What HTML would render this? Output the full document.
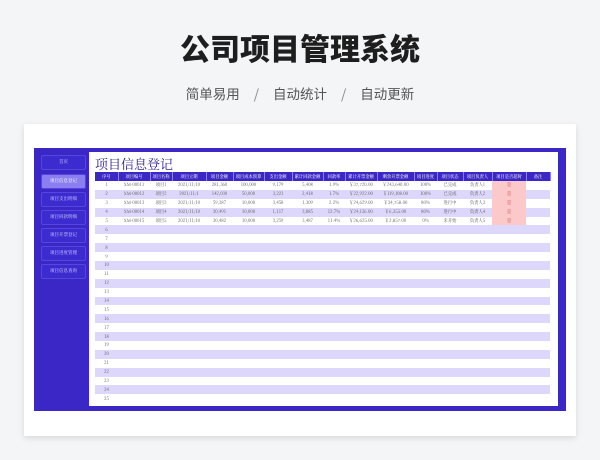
<!DOCTYPE html>
<html><head><meta charset="utf-8"><style>
*{margin:0;padding:0;box-sizing:border-box}
body{width:600px;height:460px;background:#f4f5f7;font-family:"Liberation Sans","Noto Sans CJK SC",sans-serif;position:relative;overflow:hidden}
h1{position:absolute;top:25px;left:0;width:600px;text-align:center;font-size:30px;font-weight:900;color:#1e1e1e;font-family:"Noto Sans CJK SC",sans-serif}
.sub{position:absolute;top:83px;left:0;width:600px;text-align:center;font-size:13.5px;color:#555;font-family:"Noto Sans CJK SC",sans-serif}
.sub span{margin:0 14px;color:#888}
.card{position:absolute;left:24px;top:124px;width:552px;height:312px;background:#fff;box-shadow:0 2px 6px rgba(0,0,0,.12)}
.frame{position:absolute;left:34px;top:148px;width:532px;height:263px;background:#3a27c5}
.panel{position:absolute;left:89px;top:152px;width:469px;height:254px;background:#fff}
.btn{position:absolute;left:41px;width:45px;height:15px;background:#3c2ccf;border:1px solid #5646dd;border-radius:2px;color:#d8d4ff;font-size:4.5px;text-align:center;line-height:13px;font-family:"Noto Serif CJK SC",serif}
.btn.act{background:#8a7ef0;color:#fff}
.title{position:absolute;left:95px;top:154px;font-size:13px;color:#2e2296;font-family:"Noto Serif CJK SC",serif}
table{position:absolute;left:95px;top:172px;width:455px;border-collapse:collapse;table-layout:fixed;font-family:"Noto Serif CJK SC",serif;font-size:4.3px;color:#555}
th{background:#3a27c5;color:#fff;font-weight:normal;height:9px;border-right:1px solid #8a7ef0;text-align:center;white-space:nowrap;overflow:hidden}
td{height:8.9px;text-align:center;white-space:nowrap;overflow:hidden;padding:0}
tr:nth-child(odd) td{background:#dcd7fb}
tr:nth-child(even) td{background:#fff}
td.r{background:#fcc9cb!important;color:#c44}
</style></head><body>
<h1>公司项目管理系统</h1>
<div class="sub">简单易用<span>/</span>自动统计<span>/</span>自动更新</div>
<div class="card"></div>
<div class="frame"></div>
<div class="panel"></div>
<div class="btn" style="top:155px">首页</div>
<div class="btn act" style="top:174px">项目信息登记</div>
<div class="btn" style="top:192px">项目支出明细</div>
<div class="btn" style="top:210px">项目回款明细</div>
<div class="btn" style="top:228px">项目开票登记</div>
<div class="btn" style="top:246px">项目进度管理</div>
<div class="btn" style="top:264px">项目信息查询</div>
<div class="title">项目信息登记</div>
<table>
<colgroup><col style="width:23px"><col style="width:32px"><col style="width:22px"><col style="width:34px"><col style="width:27px"><col style="width:31px"><col style="width:28px"><col style="width:31px"><col style="width:22px"><col style="width:32px"><col style="width:37px"><col style="width:23px"><col style="width:26px"><col style="width:29px"><col style="width:34px"><col style="width:24px"></colgroup>
<tr><th>序号</th><th>项目编号</th><th>项目名称</th><th>项目立期</th><th>项目金额</th><th>项目成本预算</th><th>支出金额</th><th>累计回款金额</th><th>回款率</th><th>累计开票金额</th><th>剩余开票金额</th><th>项目进度</th><th>项目状态</th><th>项目负责人</th><th>项目是否超时</th><th>备注</th></tr>
<tr><td>1</td><td>XM-00011</td><td>项目1</td><td>2021/11/10</td><td>281,360</td><td>100,000</td><td>9,179</td><td>5,408</td><td>1.9%</td><td>￥37,720.00</td><td>￥243,640.00</td><td>100%</td><td>已完成</td><td>负责人1</td><td class="r">是</td><td></td></tr>
<tr><td>2</td><td>XM-00012</td><td>项目2</td><td>2021/11/1</td><td>142,030</td><td>50,000</td><td>3,223</td><td>2,418</td><td>1.7%</td><td>￥22,922.00</td><td>￥119,108.00</td><td>100%</td><td>已完成</td><td>负责人2</td><td class="r">是</td><td></td></tr>
<tr><td>3</td><td>XM-00013</td><td>项目3</td><td>2021/11/10</td><td>59,387</td><td>10,000</td><td>3,458</td><td>1,309</td><td>2.2%</td><td>￥24,629.00</td><td>￥34,758.00</td><td>80%</td><td>进行中</td><td>负责人3</td><td class="r">是</td><td></td></tr>
<tr><td>4</td><td>XM-00014</td><td>项目4</td><td>2021/11/10</td><td>30,491</td><td>10,000</td><td>1,117</td><td>3,885</td><td>12.7%</td><td>￥24,136.00</td><td>￥6,355.00</td><td>80%</td><td>进行中</td><td>负责人4</td><td class="r">是</td><td></td></tr>
<tr><td>5</td><td>XM-00015</td><td>项目5</td><td>2021/11/10</td><td>30,482</td><td>10,000</td><td>3,259</td><td>3,487</td><td>11.4%</td><td>￥26,625.00</td><td>￥3,857.00</td><td>0%</td><td>未开始</td><td>负责人5</td><td class="r">是</td><td></td></tr>
<tr><td>6</td><td colspan="15"></td></tr><tr><td>7</td><td colspan="15"></td></tr><tr><td>8</td><td colspan="15"></td></tr><tr><td>9</td><td colspan="15"></td></tr><tr><td>10</td><td colspan="15"></td></tr><tr><td>11</td><td colspan="15"></td></tr><tr><td>12</td><td colspan="15"></td></tr><tr><td>13</td><td colspan="15"></td></tr><tr><td>14</td><td colspan="15"></td></tr><tr><td>15</td><td colspan="15"></td></tr><tr><td>16</td><td colspan="15"></td></tr><tr><td>17</td><td colspan="15"></td></tr><tr><td>18</td><td colspan="15"></td></tr><tr><td>19</td><td colspan="15"></td></tr><tr><td>20</td><td colspan="15"></td></tr><tr><td>21</td><td colspan="15"></td></tr><tr><td>22</td><td colspan="15"></td></tr><tr><td>23</td><td colspan="15"></td></tr><tr><td>24</td><td colspan="15"></td></tr><tr><td>25</td><td colspan="15"></td></tr>
</table>
</body></html>
